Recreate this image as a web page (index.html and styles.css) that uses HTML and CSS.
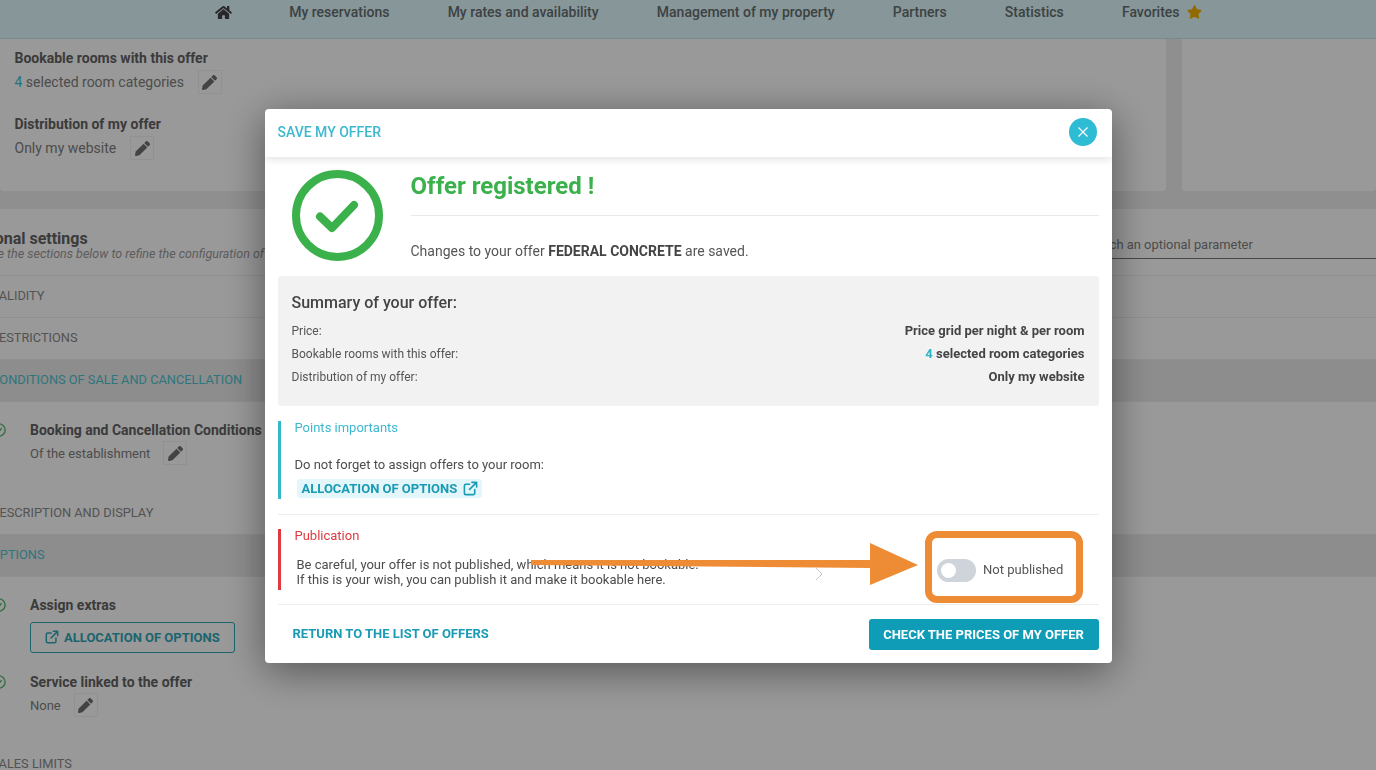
FILE: index.html
```html
<!DOCTYPE html>
<html lang="en">
<head>
<meta charset="utf-8">
<title>Save my offer</title>
<link rel="stylesheet" href="styles.css">
</head>
<body>
<div class="page">
  <nav class="nav">
    <svg class="home" viewBox="0 0 576 512"><path d="M280.37 148.26L96 300.11V464a16 16 0 0 0 16 16l112.06-.29a16 16 0 0 0 15.92-16V368a16 16 0 0 1 16-16h64a16 16 0 0 1 16 16v95.64a16 16 0 0 0 16 16.05L464 480a16 16 0 0 0 16-16V300L295.67 148.26a12.19 12.19 0 0 0-15.3 0zM571.6 251.47L488 182.56V44.05a12 12 0 0 0-12-12h-56a12 12 0 0 0-12 12v72.61L318.47 43a48 48 0 0 0-61 0L4.34 251.47a12 12 0 0 0-1.6 16.9l25.5 31A12 12 0 0 0 45.15 301l235.22-193.74a12.19 12.19 0 0 1 15.3 0L530.9 301a12 12 0 0 0 16.9-1.6l25.5-31a12 12 0 0 0-1.7-16.93z"/></svg>
    <a>My reservations</a>
    <a>My rates and availability</a>
    <a>Management of my property</a>
    <a>Partners</a>
    <a>Statistics</a>
    <a class="fav">Favorites
      <svg class="star" viewBox="0 0 576 512"><path d="M259.3 17.8L194 150.2 47.9 171.5c-26.2 3.8-36.7 36.1-17.7 54.6l105.7 103-25 145.5c-4.5 26.3 23.2 46 46.4 33.7L288 439.6l130.7 68.7c23.2 12.2 50.9-7.4 46.4-33.7l-25-145.5 105.7-103c19-18.5 8.5-50.8-17.7-54.6L382 150.2 316.7 17.8c-11.7-23.6-45.6-23.9-57.4 0z"/></svg>
    </a>
  </nav>

  <div class="cards">
    <section class="card card-main">
      <div class="field">
        <h4>Bookable rooms with this offer</h4>
        <div class="val"><span><b class="num">4</b> selected room categories</span>
          <span class="pen"><svg viewBox="0 0 512 512"><path d="M497.9 142.1l-46.1 46.1c-4.7 4.7-12.3 4.7-17 0l-111-111c-4.7-4.7-4.7-12.3 0-17l46.1-46.1c18.7-18.7 49.1-18.7 67.9 0l60.1 60.1c18.8 18.7 18.8 49.1 0 67.9zM284.2 99.8L21.6 362.4.4 483.9c-2.9 16.4 11.4 30.6 27.8 27.8l121.5-21.3 262.6-262.6c4.7-4.7 4.7-12.3 0-17l-111-111c-4.8-4.7-12.4-4.7-17.1 0z"/></svg></span></div>
      </div>
      <div class="field">
        <h4>Distribution of my offer</h4>
        <div class="val"><span>Only my website</span>
          <span class="pen"><svg viewBox="0 0 512 512"><path d="M497.9 142.1l-46.1 46.1c-4.7 4.7-12.3 4.7-17 0l-111-111c-4.7-4.7-4.7-12.3 0-17l46.1-46.1c18.7-18.7 49.1-18.7 67.9 0l60.1 60.1c18.8 18.7 18.8 49.1 0 67.9zM284.2 99.8L21.6 362.4.4 483.9c-2.9 16.4 11.4 30.6 27.8 27.8l121.5-21.3 262.6-262.6c4.7-4.7 4.7-12.3 0-17l-111-111c-4.8-4.7-12.4-4.7-17.1 0z"/></svg></span></div>
      </div>
    </section>
    <section class="card card-side"></section>
  </div>

  <section class="settings">
    <header class="settings-head">
      <div class="head-text">
        <h2>Additional settings</h2>
        <p>Complete the sections below to refine the configuration of your offer</p>
      </div>
      <div class="search">Search an optional parameter</div>
    </header>
    <div class="row">Validity</div>
    <div class="row">Restrictions</div>
    <div class="row active">Conditions of sale and cancellation</div>
    <div class="panel panel-cond">
      <div class="opt">
        <svg class="tick" viewBox="0 0 16 16"><circle cx="8" cy="8" r="7"/><path d="M5 8.2l2.2 2.2L11 6"/></svg>
        <div>
          <h4>Booking and Cancellation Conditions</h4>
          <div class="val"><span>Of the establishment</span>
            <span class="pen"><svg viewBox="0 0 512 512"><path d="M497.9 142.1l-46.1 46.1c-4.7 4.7-12.3 4.7-17 0l-111-111c-4.7-4.7-4.7-12.3 0-17l46.1-46.1c18.7-18.7 49.1-18.7 67.9 0l60.1 60.1c18.8 18.7 18.8 49.1 0 67.9zM284.2 99.8L21.6 362.4.4 483.9c-2.9 16.4 11.4 30.6 27.8 27.8l121.5-21.3 262.6-262.6c4.7-4.7 4.7-12.3 0-17l-111-111c-4.8-4.7-12.4-4.7-17.1 0z"/></svg></span></div>
        </div>
      </div>
    </div>
    <div class="row">Description and display</div>
    <div class="row active">Options</div>
    <div class="panel panel-opts">
      <div class="opt">
        <svg class="tick" viewBox="0 0 16 16"><circle cx="8" cy="8" r="7"/><path d="M5 8.2l2.2 2.2L11 6"/></svg>
        <div>
          <h4>Assign extras</h4>
          <a class="outline-btn">
            <svg class="ext" viewBox="0 0 16 16"><path d="M12.5 9v4a1.5 1.5 0 0 1-1.5 1.5H3A1.5 1.5 0 0 1 1.5 13V5A1.5 1.5 0 0 1 3 3.500h4M9.500 1.500h5v5M14.500 1.500L7 9"/></svg>
            Allocation of options
          </a>
        </div>
      </div>
      <div class="opt">
        <svg class="tick" viewBox="0 0 16 16"><circle cx="8" cy="8" r="7"/><path d="M5 8.2l2.2 2.2L11 6"/></svg>
        <div>
          <h4>Service linked to the offer</h4>
          <div class="val"><span>None</span>
            <span class="pen"><svg viewBox="0 0 512 512"><path d="M497.9 142.1l-46.1 46.1c-4.7 4.7-12.3 4.7-17 0l-111-111c-4.7-4.7-4.7-12.3 0-17l46.1-46.1c18.7-18.7 49.1-18.7 67.9 0l60.1 60.1c18.8 18.7 18.8 49.1 0 67.9zM284.2 99.8L21.6 362.4.4 483.9c-2.9 16.4 11.4 30.6 27.8 27.8l121.5-21.3 262.6-262.6c4.7-4.7 4.7-12.3 0-17l-111-111c-4.8-4.7-12.4-4.7-17.1 0z"/></svg></span></div>
        </div>
      </div>
    </div>
    <div class="row">Sales limits</div>
  </section>
</div>

<div class="scrim">
  <div class="modal">
    <header class="modal-head">
      <span class="modal-title">SAVE MY OFFER</span>
      <button class="close"><svg viewBox="0 0 12 12"><path d="M1.500 1.500l9 9M10.500 1.500l-9 9"/></svg></button>
    </header>
    <div class="modal-body">
      <div class="success">
        <svg class="success-icon" viewBox="0 0 91 91"><circle cx="45.500" cy="45.500" r="41.500"/><path d="M28 46.500l12 11.500 22-23"/></svg>
        <div class="success-text">
          <h1>Offer registered !</h1>
          <p>Changes to your offer <b>FEDERAL CONCRETE</b> are saved.</p>
        </div>
      </div>

      <div class="summary">
        <h3>Summary of your offer:</h3>
        <div class="sum-row"><span>Price:</span><b>Price grid per night &amp; per room</b></div>
        <div class="sum-row"><span>Bookable rooms with this offer:</span><b><i class="num">4</i> selected room categories</b></div>
        <div class="sum-row"><span>Distribution of my offer:</span><b>Only my website</b></div>
      </div>

      <div class="note note-info">
        <h5>Points importants</h5>
        <p>Do not forget to assign offers to your room:</p>
        <a class="chip">ALLOCATION OF OPTIONS
          <svg class="ext" viewBox="0 0 16 16"><path d="M12.500 9v4a1.500 1.500 0 0 1-1.500 1.500H3A1.500 1.500 0 0 1 1.500 13V5A1.500 1.500 0 0 1 3 3.500h4M9.500 1.500h5v5M14.500 1.500L7 9"/></svg>
        </a>
      </div>

      <div class="pub">
        <div class="note note-danger">
          <h5>Publication</h5>
          <p>Be careful, your offer is not published, which means it is not bookable.<br>If this is your wish, you can publish it and make it bookable here.</p>
        </div>
        <svg class="chev" viewBox="0 0 8 14"><path d="M1 1l6 6-6 6"/></svg>
        <div class="toggle-wrap">
          <span class="toggle"><span class="knob"></span></span>
          <span class="toggle-label">Not published</span>
        </div>
      </div>

      <footer class="modal-foot">
        <a class="back">RETURN TO THE LIST OF OFFERS</a>
        <a class="primary">CHECK THE PRICES OF MY OFFER</a>
      </footer>
    </div>
  </div>
</div>

<svg class="arrow" viewBox="0 0 388 43"><path d="M0 17L339 17V0L387 22L339 42V25L0 22Z"/></svg>
<div class="callout"></div>
</body>
</html>
```

FILE: styles.css
```css
* { box-sizing: border-box; }
html, body { margin: 0; height: 100%; overflow: hidden; }
body { font-family: Roboto, "Liberation Sans", sans-serif; font-size: 14px; color: #808080; }
h1, h2, h3, h4, h5, p { margin: 0; }

.page { height: 770px; overflow: hidden; background: #eeeeee; }

.nav { height: 39px; padding: 0 0 14px 215px; display: flex; align-items: center; gap: 58.200px; background: #e1fbfe; border-bottom: 1px solid #c9e6ea; }
.nav a { font-weight: 500; font-size: 14px; color: #666e70; white-space: nowrap; }
.home { width: 17px; height: 15px; margin-right: -1px; fill: #444; flex: none; }
.fav { display: flex; align-items: center; gap: 7px; }
.star { width: 15px; height: 14px; fill: #f2b100; }

.cards { display: flex; gap: 16px; height: 152px; }
.card { background: #fff; border-radius: 0 0 4px 4px; }
.card-main { width: 1166px; padding: 9px 14.500px; }
.card-side { flex: 1; }
.field { height: 66px; }
.card h4, .opt h4 { font-size: 14px; font-weight: 700; color: #636363; line-height: 20px; }
.val { display: flex; align-items: center; gap: 14px; height: 24px; margin-top: 2px; color: #808080; }
.num { color: #3cc0d0; font-weight: 400; font-style: normal; }
.pen { width: 24px; height: 24px; display: flex; align-items: center; justify-content: center; border: 1px solid #f2f2f2; }
.pen svg { width: 15px; height: 15px; fill: #707070; }

.settings { margin: 18px 0 0 -48px; background: #fff; height: 561px; }
.settings-head { height: 67px; padding: 21px 0 0 0; display: flex; border-bottom: 1px solid #eeeeee; }
.head-text { width: 1132px; }
.settings h2 { font-size: 16px; font-weight: 700; line-height: 18px; color: #636363; }
.settings p { font-size: 12.500px; font-style: italic; line-height: 11px; color: #9a9a9a; white-space: nowrap; }
.search { flex: 1; height: 29px; padding-top: 7px; font-size: 12.900px; color: #808080; border-bottom: 1px solid #777; }
.row { height: 42px; padding: 0 0 2px 39px; display: flex; align-items: center; font-size: 12.800px; text-transform: uppercase; color: #8a8a8a; border-bottom: 1px solid #eeeeee; }
.row.active { background: #ebebeb; color: #4ec4d0; }
.panel { padding-left: 40px; }
.panel .val { font-size: 13px; gap: 13px; margin-top: 1px; }
.panel-cond { height: 91px; padding-top: 18px; }
.panel-opts { height: 167px; padding-top: 18px; display: flex; flex-direction: column; gap: 19px; }
.opt { display: flex; gap: 24px; }
.tick { width: 14px; height: 14px; margin-top: 3px; fill: none; stroke: #4fb56a; stroke-width: 1.500; flex: none; }
.outline-btn { display: flex; align-items: center; gap: 5px; width: 205px; height: 31px; margin-top: 7px; padding: 0 0 1px 14px; border: 1px solid #2fa9b5; border-radius: 3px; font-size: 13px; font-weight: 700; text-transform: uppercase; color: #30a8b8; }
.ext { width: 14px; height: 14px; fill: none; stroke: currentColor; stroke-width: 1.700; stroke-linecap: round; stroke-linejoin: round; flex: none; }

.scrim { position: fixed; inset: 0; background: rgba(0, 0, 0, .4); display: flex; justify-content: center; align-items: flex-start; padding-top: 109px; }
.modal { width: 847px; height: 554px; background: #fff; border-radius: 4px; box-shadow: 0 8px 40px rgba(0, 0, 0, .45); overflow: hidden; color: #555; }
.modal-head { position: relative; height: 48px; padding: 0 15px 2px 13px; display: flex; align-items: center; justify-content: space-between; box-shadow: 0 2px 8px rgba(0, 0, 0, .12); }
.modal-title { font-size: 14px; font-weight: 500; color: #3cb9cf; }
.close { width: 28px; height: 28px; padding: 0; border: 0; border-radius: 50%; background: #2dbcd3; display: flex; align-items: center; justify-content: center; }
.close svg { width: 12px; height: 12px; fill: none; stroke: #fff; stroke-width: 1.200; }
.modal-body { padding: 0 13px; }

.success { display: flex; gap: 28px; height: 119px; padding: 13px 0 0 14px; }
.success-icon { width: 91px; height: 91px; flex: none; fill: none; stroke: #3bb14b; stroke-width: 8; }
.success-icon path { stroke-width: 8; stroke-linecap: round; stroke-linejoin: round; }
.success-text { flex: 1; }
.success-text h1 { height: 47px; margin-top: -1px; padding-top: 3px; border-bottom: 1px solid #eaeaea; font-size: 24px; font-weight: 700; line-height: 28px; color: #3bb14b; }
.success-text p { margin-top: 27px; font-size: 14px; line-height: 16px; color: #555; }
.success-text b { font-weight: 700; color: #444; }

.summary { height: 130px; padding: 17px 14px 0; background: #f2f2f2; border-radius: 3px; }
.summary h3 { font-size: 16px; font-weight: 500; line-height: 19px; color: #444; margin-bottom: 7px; }
.sum-row { display: flex; justify-content: space-between; align-items: center; height: 23px; font-size: 12px; color: #555; }
.sum-row b { font-size: 13px; font-weight: 700; color: #444; }
.sum-row .num { font-weight: 700; color: #2fb4c8; }

.note { border-left: 3px solid #37b8c9; padding-left: 14px; }
.note h5 { font-size: 13px; font-weight: 400; line-height: 14px; color: #3cb9cf; }
.note p { font-size: 13px; line-height: 15px; color: #4d4d4d; }
.note-info { margin-top: 15px; height: 78px; }
.note-info p { margin-top: 22px; }
.chip { display: inline-flex; align-items: center; gap: 6px; height: 19px; margin: 7px 0 0 2px; padding: 0 4px 0 5px; background: #e3f6f9; border-radius: 3px; font-size: 13px; font-weight: 700; color: #1a9bb5; }
.chip .ext { width: 15px; height: 15px; }

.pub { position: relative; display: flex; align-items: flex-start; margin-top: 15px; padding-top: 14px; height: 91px; border-top: 1px solid #eeeeee; border-bottom: 1px solid #eeeeee; }
.note-danger { border-left-color: #de3a3f; height: 61px; width: 540px; }
.note-danger h5 { color: #de3a3f; }
.note-danger p { margin: 14px 0 0 2px; white-space: nowrap; }
.chev { position: absolute; left: 537px; top: 52px; width: 8px; height: 14px; fill: none; stroke: #c8c8c8; stroke-width: 1; }
.toggle-wrap { display: flex; align-items: center; gap: 7.500px; margin: 30px 0 0 119px; font-size: 13px; color: #555; }
.toggle-label { margin-bottom: 2px; }
.toggle { width: 39px; height: 23px; padding: 4px; background: #ced4da; border-radius: 12px; }
.knob { display: block; width: 15px; height: 15px; border-radius: 50%; background: #fff; }

.modal-foot { display: flex; align-items: center; justify-content: space-between; padding: 14px 0 0 15px; }
.back { margin-bottom: 2px; font-size: 13px; font-weight: 700; color: #1a9bb5; }
.primary { width: 230px; height: 31px; padding-bottom: 1px; display: flex; align-items: center; justify-content: center; background: #0f9cb7; border-radius: 3px; font-size: 13px; font-weight: 700; color: #fff; }

.arrow { position: fixed; left: 531px; top: 543px; width: 388px; height: 43px; fill: #ee8c36; }
.callout { position: fixed; left: 925px; top: 531px; width: 158px; height: 72px; border: 7px solid #ee8c36; border-radius: 12px; }
```
